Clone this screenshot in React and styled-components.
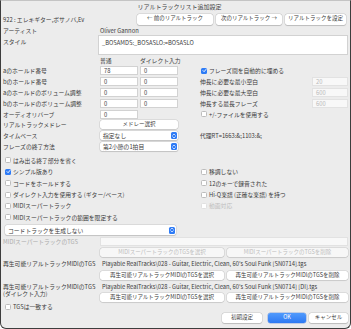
import React from 'react'
import styled, { createGlobalStyle } from 'styled-components'

const GlobalStyle = createGlobalStyle`
  html, body {
    margin: 0;
    padding: 0;
    background: #ffffff;
  }
  body {
    font-family: "Noto Sans CJK JP", "Noto Sans", sans-serif;
    font-size: 5.8px;
    color: #3a3a3a;
  }
  * {
    box-sizing: border-box;
  }
`

const Window = styled.div`
  width: 351px;
  height: 329px;
  background: #ececec;
  border: 1px solid #3d3d3d;
  border-top-color: #c4c4c4;
  border-radius: 0 0 6px 6px;
  padding: 0 2px 0 2px;
  display: flex;
  flex-direction: column;
  overflow: hidden;
`

const TitleBar = styled.div`
  height: 11px;
  line-height: 11px;
  text-align: center;
  padding-left: 8px;
  font-size: 6px;
  color: #444444;
`

const NavRow = styled.div`
  height: 14px;
  display: flex;
  align-items: center;
  justify-content: space-between;
`

const NavButtons = styled.div`
  display: flex;
  gap: 3px;
  margin-right: 2px;
`

const Button = styled.button`
  height: ${p => p.$h || 10}px;
  width: ${p => (p.$w ? `${p.$w}px` : 'auto')};
  flex: ${p => (p.$grow ? 1 : 'none')};
  padding: 0 2px;
  border: none;
  border-radius: 2.5px;
  background: ${p => (p.$disabled ? '#f7f7f7' : '#ffffff')};
  box-shadow: 0 0 0 0.5px rgba(0, 0, 0, 0.13), 0 0.5px 1px rgba(0, 0, 0, 0.15);
  color: ${p => (p.$disabled ? '#bdbdbd' : '#3a3a3a')};
  font-family: inherit;
  font-size: 5.5px;
  line-height: 1;
  white-space: nowrap;
  overflow: hidden;
`

const PrimaryButton = styled(Button)`
  background: linear-gradient(#519afc, #2d79f3);
  color: #ffffff;
  box-shadow: 0 0 0 0.5px rgba(30, 90, 200, 0.45);
`

const FormRow = styled.div`
  display: grid;
  grid-template-columns: 95px 1fr;
  align-items: ${p => (p.$top ? 'start' : 'center')};
  height: ${p => p.$h}px;
  margin-top: ${p => p.$mt || 0}px;
`

const Label = styled.span`
  color: ${p => (p.$muted ? '#ababab' : '#3a3a3a')};
  white-space: nowrap;
  padding-top: ${p => p.$pt || 0}px;
`

const Value = styled.span`
  padding-left: 2px;
  white-space: nowrap;
`

const TextBox = styled.div`
  height: ${p => p.$h || 9}px;
  background: ${p => (p.$disabled ? '#f8f8f8' : '#ffffff')};
  border: 0.5px solid ${p => (p.$disabled ? '#e2e2e2' : '#d2d2d2')};
  color: ${p => (p.$disabled ? '#b8b8b8' : '#3a3a3a')};
  padding: ${p => (p.$multi ? '2px 3px' : '0 3px')};
  display: flex;
  align-items: ${p => (p.$multi ? 'flex-start' : 'center')};
  white-space: nowrap;
  overflow: hidden;
`

const HeaderRow = styled.div`
  display: grid;
  grid-template-columns: 97px 40px 1fr;
  height: 9px;
  align-items: center;
  margin-top: 1px;
`

const MainArea = styled.div`
  display: flex;
  margin-top: 1px;
`

const LeftGrid = styled.div`
  width: 173px;
  display: grid;
  grid-template-columns: 95px 38px 38px;
  column-gap: 2px;
  grid-auto-rows: 9px;
  row-gap: 1.9px;
  align-items: stretch;
`

const RightGrid = styled.div`
  flex: 1;
  margin-left: 24px;
  display: grid;
  grid-template-columns: 1fr 36px;
  grid-auto-rows: 9px;
  row-gap: 1.9px;
  align-items: stretch;
`

const GridLabel = styled.span`
  display: flex;
  align-items: center;
  white-space: nowrap;
`

const Span2 = styled.div`
  grid-column: span 2;
  display: flex;
  align-items: stretch;
`

const SelectBox = styled.div`
  flex: 1;
  height: ${p => p.$h || 9}px;
  max-width: ${p => (p.$w ? `${p.$w}px` : 'none')};
  margin-left: ${p => p.$ml || 0}px;
  background: #ffffff;
  border-radius: 2px;
  box-shadow: 0 0 0 0.5px rgba(0, 0, 0, 0.13), 0 0.5px 1px rgba(0, 0, 0, 0.12);
  display: flex;
  align-items: center;
  justify-content: space-between;
  padding: 0 1px 0 3px;
`

const SelectArrow = styled.span`
  width: 6px;
  height: 7px;
  border-radius: 1.5px;
  background: #2f7cf6;
  display: flex;
  align-items: center;
  justify-content: center;
`

const CheckRow = styled.label`
  display: flex;
  align-items: center;
  gap: 2px;
  padding-left: ${p => p.$pl || 0}px;
  color: ${p => (p.$disabled ? '#bdbdbd' : '#3a3a3a')};
  white-space: nowrap;
  grid-column: ${p => p.$col || 'auto'};
`

const Box = styled.span`
  width: 6px;
  height: 6px;
  border-radius: 1.5px;
  flex: none;
  background: ${p => (p.$checked ? '#2f7cf6' : '#ffffff')};
  border: ${p => (p.$checked ? 'none' : `0.5px solid ${p.$disabled ? '#e0e0e0' : '#bcbcbc'}`)};
  display: flex;
  align-items: center;
  justify-content: center;
`

const CheckGrid = styled.div`
  display: grid;
  grid-template-columns: 198px 1fr;
  grid-auto-rows: 9px;
  row-gap: 2.4px;
  margin-top: 4.7px;
`

const ChordRow = styled.div`
  display: flex;
  height: 10px;
  margin-top: 3.5px;
`

const TgsGrid = styled.div`
  display: grid;
  grid-template-columns: 97px 1fr;
  grid-auto-rows: 9px;
  row-gap: 2.3px;
  margin-top: 1.5px;
  align-items: center;
`

const ButtonPair = styled.div`
  grid-column: 2;
  display: flex;
  gap: 3px;
  height: 9px;
`

const TwoLineLabel = styled.span`
  grid-row: span 2;
  align-self: start;
  display: flex;
  flex-direction: column;
  padding-top: 0.5px;
  white-space: nowrap;
`

const Line = styled.span`
  height: 7px;
  line-height: 7px;
`

const FooterRow = styled.div`
  display: flex;
  justify-content: flex-end;
  align-items: center;
  gap: ${p => p.$gap}px;
  height: 10px;
  margin-top: 1.5px;
`

const Check = ({ checked, disabled, children, pl, col }) => (
  <CheckRow $pl={pl} $disabled={disabled} $col={col}>
    <Box $checked={checked} $disabled={disabled}>
      {checked && (
        <svg width="5" height="5" viewBox="0 0 10 10">
          <path d="M2 5.2 L4.2 7.4 L8 2.8" fill="none" stroke="#fff" strokeWidth="1.8" strokeLinecap="round" strokeLinejoin="round" />
        </svg>
      )}
    </Box>
    {children}
  </CheckRow>
)

const Select = ({ children, ...rest }) => (
  <SelectBox {...rest}>
    <span>{children}</span>
    <SelectArrow>
      <svg width="4" height="6" viewBox="0 0 8 12">
        <path d="M1.5 4.5 L4 2 L6.5 4.5 M1.5 7.5 L4 10 L6.5 7.5" fill="none" stroke="#fff" strokeWidth="1.4" strokeLinecap="round" strokeLinejoin="round" />
      </svg>
    </SelectArrow>
  </SelectBox>
)

const holdRows = [
  ['aのホールド番号', '78', '0'],
  ['bのホールド番号', '0', '0'],
  ['aのホールドのボリューム調整', '0', '0'],
  ['bのホールドのボリューム調整', '0', '0'],
]

const stretchRows = [
  ['伸長に必要な最小空白', '20'],
  ['伸長に必要な最大空白', '600'],
  ['伸長する最長フレーズ', '600'],
]

const playable = "Playable RealTracks\\028 - Guitar, Electric, Clean, 60's Soul Funk [SN0714]"

export default function App() {
  return (
    <>
      <GlobalStyle />
      <Window>
        <TitleBar>リアルトラックリスト追加設定</TitleBar>

        <NavRow>
          <span>922 : エレキギター,ボサノバ,Ev</span>
          <NavButtons>
            <Button $w={76} $h={11}>← 前のリアルトラック</Button>
            <Button $w={66} $h={11}>次のリアルトラック →</Button>
            <Button $w={61} $h={11}>リアルトラックを設定</Button>
          </NavButtons>
        </NavRow>

        <FormRow $h={9}>
          <Label>アーティスト</Label>
          <Value>Oliver Gannon</Value>
        </FormRow>
        <FormRow $h={20} $top>
          <Label $pt={2}>スタイル</Label>
          <TextBox $h={20} $multi>_BOSAMDS:_BOSASLO:=BOSASLO</TextBox>
        </FormRow>

        <HeaderRow>
          <span />
          <span>普通</span>
          <span>ダイレクト入力</span>
        </HeaderRow>

        <MainArea>
          <LeftGrid>
            {holdRows.map(([label, a, b]) => (
              <React.Fragment key={label}>
                <GridLabel>{label}</GridLabel>
                <TextBox>{a}</TextBox>
                <TextBox>{b}</TextBox>
              </React.Fragment>
            ))}
            <GridLabel>オーディオリバーブ</GridLabel>
            <TextBox>0</TextBox>
            <span />
            <GridLabel>リアルトラックメドレー</GridLabel>
            <Span2>
              <Button $grow $h={9}>メドレー選択</Button>
            </Span2>
            <GridLabel>タイムベース</GridLabel>
            <Span2>
              <Select>指定なし</Select>
            </Span2>
            <GridLabel>フレーズの終了方法</GridLabel>
            <Span2>
              <Select>第2小節の1拍目</Select>
            </Span2>
          </LeftGrid>

          <RightGrid>
            <Check checked col="span 2" pl={1}>フレーズ間を自動的に埋める</Check>
            {stretchRows.map(([label, v]) => (
              <React.Fragment key={label}>
                <GridLabel>{label}</GridLabel>
                <TextBox $disabled>{v}</TextBox>
              </React.Fragment>
            ))}
            <Check col="span 2" pl={1}>+/-ファイルを使用する</Check>
            <span />
            <span />
            <GridLabel>代理RT=1663:&amp;;1103:&amp;;</GridLabel>
          </RightGrid>
        </MainArea>

        <CheckGrid>
          <Check pl={2}>はみ出る終了部分を省く</Check>
          <span />
          <Check pl={2} checked>シンプル版あり</Check>
          <Check>移調しない</Check>
          <Check pl={2}>コードをホールドする</Check>
          <Check>12のキーで録音された</Check>
          <Check pl={2}>ダイレクト入力を使用する (ギター/ベース)</Check>
          <Check>Hi-Q楽譜 (正確な楽譜) を持つ</Check>
          <Check pl={2}>MIDIスーパートラック</Check>
          <Check disabled>動画対応</Check>
          <Check pl={2}>MIDIスーパートラックの範囲を限定する</Check>
        </CheckGrid>

        <ChordRow>
          <Select $h={10} $ml={2} $w={171}>コードトラックを生成しない</Select>
        </ChordRow>

        <TgsGrid>
          <Label $muted>MIDIスーパートラックのTGS</Label>
          <TextBox $disabled />
          <ButtonPair>
            <Button $w={124} $h={9} $disabled>MIDIスーパートラックのTGSを選択</Button>
            <Button $grow $h={9} $disabled>MIDIスーパートラックのTGSを削除</Button>
          </ButtonPair>

          <Label>再生可能リアルトラックMIDIのTGS</Label>
          <Value>{playable}.tgs</Value>
          <ButtonPair>
            <Button $w={124} $h={9}>再生可能リアルトラックMIDIのTGSを選択</Button>
            <Button $grow $h={9}>再生可能リアルトラックMIDIのTGSを削除</Button>
          </ButtonPair>

          <TwoLineLabel>
            <Line>再生可能リアルトラックMIDIのTGS</Line>
            <Line>(ダイレクト入力)</Line>
          </TwoLineLabel>
          <Value>{playable} [DI].tgs</Value>
          <ButtonPair>
            <Button $w={124} $h={9}>再生可能リアルトラックMIDIのTGSを選択</Button>
            <Button $grow $h={9}>再生可能リアルトラックMIDIのTGSを削除</Button>
          </ButtonPair>
        </TgsGrid>

        <FormRow $h={9}>
          <Check pl={2}>TGSは一致する</Check>
        </FormRow>

        <FooterRow $gap={4}>
          <Button $w={40}>初期設定</Button>
          <PrimaryButton $w={38} style={{ marginLeft: 2 }}>OK</PrimaryButton>
          <Button $w={39} style={{ marginLeft: -1 }}>キャンセル</Button>
        </FooterRow>
      </Window>
    </>
  )
}
